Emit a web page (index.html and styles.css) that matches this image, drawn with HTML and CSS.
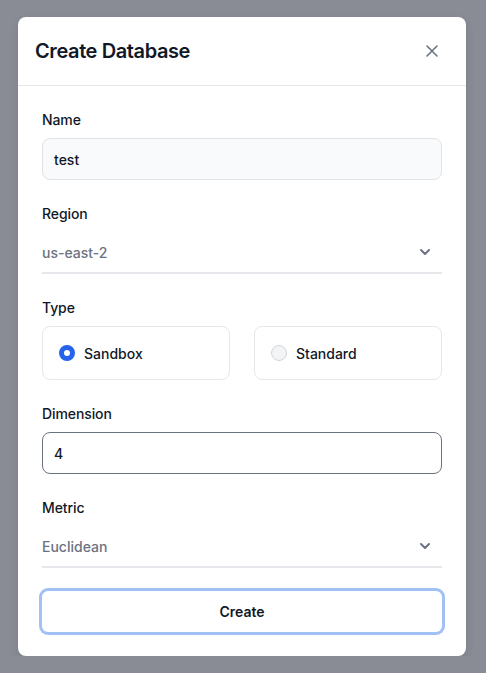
FILE: index.html
```html
<!DOCTYPE html>
<html lang="en">
<head>
  <meta charset="UTF-8" />
  <meta name="viewport" content="width=device-width, initial-scale=1.0"/>
  <title>Create Database</title>
  <link rel="stylesheet" href="styles.css">
</head>
<body>
  <div class="modal">
    <header class="modal-head">
      <h2>Create Database</h2>
      <button class="close" aria-label="Close">
        <svg width="14" height="14" viewBox="0 0 14 14"><path d="M2 2L12 12M12 2L2 12" stroke="#6b7280" stroke-width="1.6" stroke-linecap="round"/></svg>
      </button>
    </header>

    <form class="modal-body">
      <div class="field">
        <label>Name</label>
        <div class="input filled">test</div>
      </div>

      <div class="field">
        <label>Region</label>
        <div class="select">
          <span>us-east-2</span>
          <svg width="12" height="12" viewBox="0 0 12 12"><path d="M2 4l4 4 4-4" fill="none" stroke="#6b7280" stroke-width="2" stroke-linecap="round" stroke-linejoin="round"/></svg>
        </div>
      </div>

      <div class="field">
        <label>Type</label>
        <div class="options">
          <div class="option"><span class="radio on"></span>Sandbox</div>
          <div class="option"><span class="radio"></span>Standard</div>
        </div>
      </div>

      <div class="field">
        <label>Dimension</label>
        <div class="input outlined">4</div>
      </div>

      <div class="field">
        <label>Metric</label>
        <div class="select">
          <span>Euclidean</span>
          <svg width="12" height="12" viewBox="0 0 12 12"><path d="M2 4l4 4 4-4" fill="none" stroke="#6b7280" stroke-width="2" stroke-linecap="round" stroke-linejoin="round"/></svg>
        </div>
      </div>

      <button type="button" class="submit">Create</button>
    </form>
  </div>
</body>
</html>
```

FILE: styles.css
```css
body {
  margin: 0;
  background: #898c95;
  font-family: Inter, "Noto Sans", sans-serif;
  color: #111827;
  padding: 17px 20px 0 18px;
}
.modal {
  width: 448px;
  background: #fff;
  border-radius: 8px;
  box-shadow: 0 4px 10px rgba(0,0,0,0.1);
}
.modal-head {
  display: flex;
  align-items: center;
  justify-content: space-between;
  padding: 20px 23px 20px 17px;
  border-bottom: 1px solid #e5e7eb;
}
.modal-head h2 {
  margin: 0;
  font-size: 20px;
  line-height: 28px;
  font-weight: 600;
  letter-spacing: -0.4px;
}
.close {
  border: none;
  background: none;
  padding: 4px;
  display: flex;
  cursor: pointer;
}
.modal-body {
  padding: 24px 24px 24px 24px;
  display: flex;
  flex-direction: column;
  gap: 24px;
}
.field label {
  display: block;
  font-size: 14px;
  line-height: 20px;
  font-weight: 500;
  letter-spacing: -0.1px;
  margin-bottom: 8px;
}
.input {
  height: 42px;
  box-sizing: border-box;
  border-radius: 8px;
  padding: 0 11px;
  display: flex;
  align-items: center;
  font-size: 14px;
  font-weight: 500;
}
.input.filled {
  background: #f9fafb;
  border: 1px solid #e0e2e6;
}
.input.outlined {
  border: 1px solid #6b7280;
}
.select {
  height: 42px;
  box-sizing: border-box;
  border-bottom: 2px solid #e5e7eb;
  display: flex;
  align-items: center;
  justify-content: space-between;
  padding: 0 11px 0 0;
  font-size: 14px;
  font-weight: 500;
  color: #6b7280;
}
.options {
  display: grid;
  grid-template-columns: 1fr 1fr;
  gap: 24px;
}
.option {
  height: 54px;
  box-sizing: border-box;
  border: 1px solid #e5e7eb;
  border-radius: 8px;
  display: flex;
  align-items: center;
  gap: 9px;
  padding: 0 16px;
  font-size: 14px;
  font-weight: 500;
}
.radio {
  width: 16px;
  height: 16px;
  box-sizing: border-box;
  border-radius: 50%;
  border: 1px solid #d1d5db;
  background: #f3f4f6;
}
.radio.on {
  border: 5px solid #2563eb;
  background: #fff;
}
.submit {
  height: 41px;
  margin-top: -1px;
  border: none;
  border-radius: 6px;
  background: #fff;
  box-shadow: 0 0 0 3px #a1c0f6;
  font-family: inherit;
  font-size: 14px;
  font-weight: 600;
  color: #111827;
  cursor: pointer;
}
```
